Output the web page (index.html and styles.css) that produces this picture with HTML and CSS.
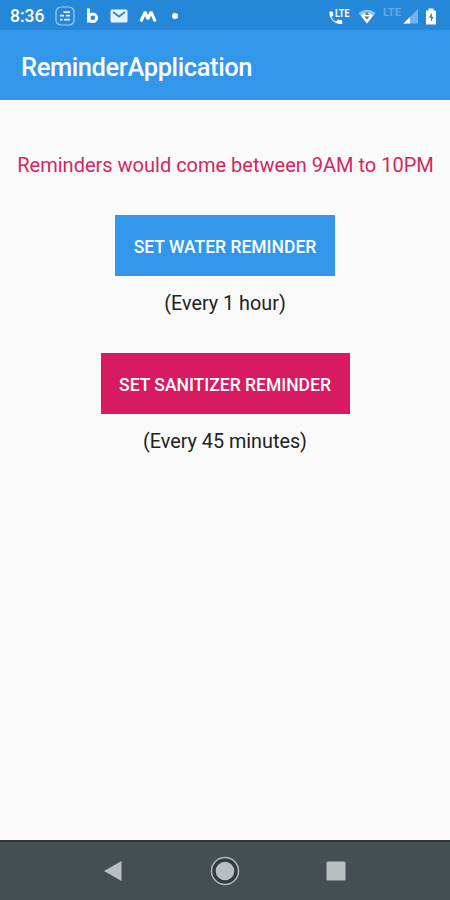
FILE: index.html
```html
<!DOCTYPE html>
<html lang="en">
<head>
    <meta charset="UTF-8">
    <meta name="viewport" content="width=device-width, initial-scale=1.0">
    <title>ReminderApplication</title>
    <link rel="stylesheet" href="styles.css">
</head>
<body>
    <div class="status-bar">
        <span class="clock">8:36</span>
        <!-- notifications -->
        <div class="status-left">
            <svg width="20" height="20" viewBox="0 0 20 20">
                <rect x="1" y="1" width="18" height="18" rx="5" fill="none" stroke="#9fd0f7" stroke-width="1.2"/>
                <path d="M8.500 6.200h6.500M5 9.700h4M11 9.700h4M5 13.700h2.500M9 13.700h6" stroke="#e2f2fe" stroke-width="1.800"/>
            </svg>
            <svg width="14" height="16" viewBox="0 0 14 16">
                <path d="M2.500 .5v14" stroke="#fff" stroke-width="3"/>
                <circle cx="6.800" cy="9.800" r="3.800" fill="none" stroke="#fff" stroke-width="3"/>
            </svg>
            <svg width="18" height="14" viewBox="0 0 18 14">
                <rect x="0.500" y="0.500" width="17" height="13" rx="1.500" fill="#e6f3fe"/>
                <path d="M3 3l6 4.500L15 3" fill="none" stroke="#3588cf" stroke-width="1.800"/>
            </svg>
            <svg width="18" height="13" viewBox="0 0 18 13">
                <path d="M1.800 11.500L6.200 2L8.800 9L12.200 2L16.200 11.500" fill="none" stroke="#fff" stroke-width="3" stroke-linejoin="bevel"/>
            </svg>
            <span class="dot"></span>
        </div>
        <!-- network and battery -->
        <div class="status-right">
            <svg width="24" height="20" viewBox="0 -2 24 20">
                <path d="M1.500 3.500h3l1 3.800-2 1.600c1 2.300 2.500 3.800 4.700 4.700l1.700-2 4.300 1v3.400C7 17 .5 10.500 1.500 3.500z" fill="#fff"/>
                <text x="7" y="8.500" class="lte" fill="#fff" textLength="14.500" lengthAdjust="spacingAndGlyphs">LTE</text>
            </svg>
            <svg width="18" height="15" viewBox="0 0 18 15">
                <path d="M0.500 4Q9-2.500 17.500 4L9 14.500z" fill="#8fc4f2"/>
                <path d="M2.800 6.500Q9 1.500 15.200 6.500L9 14.500z" fill="#fff"/>
                <path d="M9 3l2.500 2.800h-5zM6.500 7.500h5L9 10.500z" fill="#5b6d7d"/>
            </svg>
            <svg width="36" height="20" viewBox="0 -1 36 20">
                <text x="0" y="8.500" class="lte" fill="#5fa9e6" textLength="18" lengthAdjust="spacingAndGlyphs">LTE</text>
                <path d="M35 2v14.500h-14.500z" fill="#72b5ed"/>
                <path d="M27 10v6.500h-6.500z" fill="#fff"/>
            </svg>
            <svg width="12" height="17" viewBox="0 0 12 17">
                <path d="M3.500 0.500h5v2H11v14H1v-14h2.500z" fill="#fff"/>
                <path d="M6.800 4.500L4 9.800h2V14l2.500-5.200H6.800z" fill="#287fca"/>
            </svg>
        </div>
    </div>

    <header class="app-bar">
        <h1>ReminderApplication</h1>
    </header>

    <main class="content">
        <p class="notice">Reminders would come between 9AM to 10PM</p>
        <button class="btn btn-water">SET WATER REMINDER</button>
        <p class="interval">(Every 1 hour)</p>
        <button class="btn btn-sanitizer">SET SANITIZER REMINDER</button>
        <p class="interval">(Every 45 minutes)</p>
    </main>

    <nav class="nav-bar">
        <svg width="20" height="22" viewBox="0 0 20 22">
            <path d="M1 11L18.500 1v20z" fill="#b8bfc1"/>
        </svg>
        <svg width="30" height="30" viewBox="0 0 30 30">
            <circle cx="15" cy="15" r="11" fill="none" stroke="#323b40" stroke-width="4"/>
            <circle cx="15" cy="15" r="13.500" fill="none" stroke="#b0b8ba" stroke-width="1.500"/>
            <circle cx="15" cy="15" r="9.300" fill="#b8bfc1"/>
        </svg>
        <svg width="20" height="20" viewBox="0 0 20 20">
            <rect x="0.500" y="0.500" width="19" height="19" rx="1.500" fill="#b8bfc1"/>
        </svg>
    </nav>
</body>
</html>
```
FILE: styles.css
```css
* {
    box-sizing: border-box;
}
body {
    margin: 0;
    height: 900px;
    display: flex;
    flex-direction: column;
    font-family: Roboto, sans-serif;
    background-color: #fafafa;
    overflow: hidden;
}
svg {
    display: block;
    flex: none;
}
.status-bar {
    height: 30px;
    padding: 2px 13px 0 10px;
    display: flex;
    align-items: center;
    background-color: #2587d8;
    color: #fff;
}
.clock {
    width: 45px;
    font-size: 17.5px;
    font-weight: 500;
}
.status-left {
    display: flex;
    align-items: center;
    gap: 10.5px;
}
.dot {
    width: 6px;
    height: 6px;
    margin-left: 5px;
    border-radius: 50%;
    background-color: #fff;
}
.status-right {
    display: flex;
    align-items: center;
    gap: 6.5px;
    margin-left: auto;
}
.lte {
    font-size: 10px;
    font-weight: 700;
}
.app-bar {
    height: 70px;
    padding: 4px 21px 0;
    display: flex;
    align-items: center;
    background-color: #3296ea;
}
h1 {
    margin: 0;
    font-size: 25.5px;
    font-weight: 500;
    letter-spacing: -0.4px;
    color: #fff;
}
.content {
    flex: 1;
    padding-top: 50px;
    display: flex;
    flex-direction: column;
    align-items: center;
}
p {
    margin: 0;
    line-height: 30px;
    white-space: nowrap;
}
.notice {
    margin-bottom: 35px;
    padding-left: 1px;
    font-size: 20px;
    color: #d4265f;
}
.btn {
    height: 61px;
    padding: 2px 0 0;
    border: none;
    font-family: inherit;
    font-size: 17.5px;
    font-weight: 500;
    color: #fff;
}
.btn-water {
    width: 220px;
    background-color: #3296ea;
}
.btn-sanitizer {
    width: 249px;
    background-color: #d81b60;
}
.interval {
    margin: 13px 0 34px;
    font-size: 19.8px;
    color: #222;
}
.nav-bar {
    height: 60px;
    padding: 0 104px 0 103px;
    display: flex;
    align-items: center;
    justify-content: space-between;
    background-color: #454e53;
    border-top: 2px solid #2e383d;
}
```
